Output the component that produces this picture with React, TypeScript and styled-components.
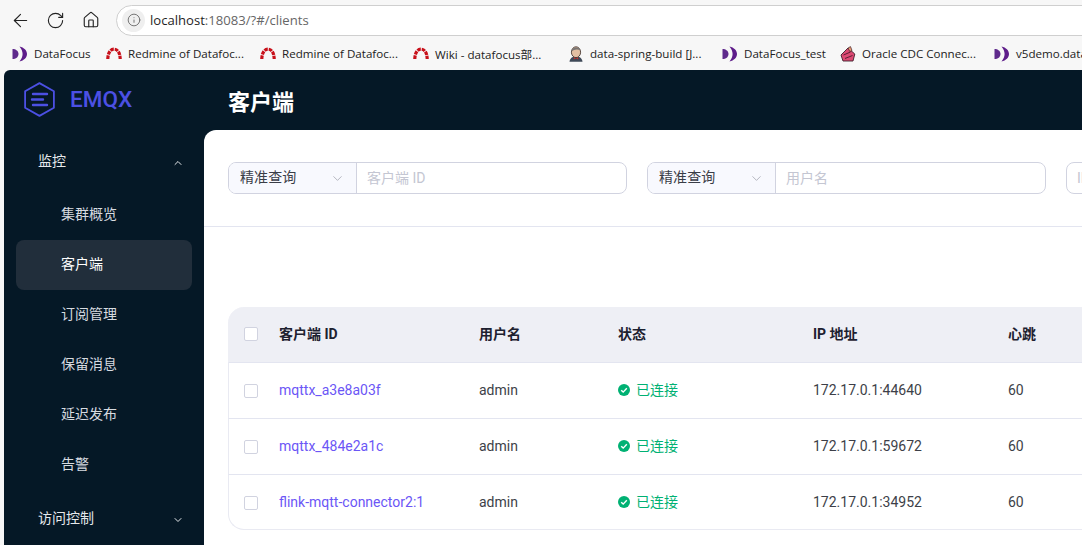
import React from "react";
import styled, { createGlobalStyle } from "styled-components";
import { ArrowLeft, RotateCw, Home, Info, ChevronDown, ChevronUp } from "lucide-react";

const GlobalStyle = createGlobalStyle`
  html, body {
    margin: 0;
    padding: 0;
    height: 545px;
    overflow: hidden;
    background: #f7f7f7;
  }
  * {
    box-sizing: border-box;
  }
`;

const APP_FONT = `Roboto, "Noto Sans CJK SC", sans-serif`;
const CHROME_FONT = `"Open Sans", "Noto Sans CJK SC", sans-serif`;

const Page = styled.div`
  width: 1082px;
  height: 545px;
  display: flex;
  flex-direction: column;
  overflow: hidden;
`;

// browser chrome
const Toolbar = styled.div`
  height: 36px;
  display: flex;
  align-items: center;
  padding: 4px 0 0 10px;
  background: #f7f7f7;
  color: #222;
`;

const NavButton = styled.div<{ $width: number }>`
  width: ${(p) => p.$width}px;
  display: flex;
  align-items: center;
`;

const AddressBar = styled.div`
  flex: 1;
  height: 31px;
  margin-right: -40px;
  display: flex;
  align-items: center;
  padding-left: 5px;
  background: #fff;
  border: 1px solid #cfcfcf;
  border-radius: 16px;
  font: 13.1px ${CHROME_FONT};
`;

const InfoBadge = styled.span`
  width: 23px;
  height: 23px;
  margin-right: 5px;
  display: flex;
  align-items: center;
  justify-content: center;
  border-radius: 50%;
  background: #efefef;
  color: #666;
`;

const Host = styled.span`
  color: #1f1f1f;
`;

const UrlRest = styled.span`
  color: #666;
`;

const BookmarkBar = styled.div`
  height: 34px;
  display: flex;
  align-items: center;
  padding: 1px 0 0 12px;
  background: #f7f7f7;
  white-space: nowrap;
  overflow: hidden;
`;

const Bookmark = styled.div<{ $width: number }>`
  flex: none;
  width: ${(p) => p.$width}px;
  display: flex;
  align-items: center;
  gap: 6px;
  font: 11.6px ${CHROME_FONT};
  color: #222;
`;

const BookmarkIcon = styled.svg`
  flex: none;
  width: 16px;
  height: 16px;
`;

// app shell
const AppFrame = styled.div`
  flex: 1;
  min-height: 0;
  margin-left: 4px;
  display: flex;
  background: #051826;
  border-top-left-radius: 6px;
  font-family: ${APP_FONT};
`;

const Sidebar = styled.aside`
  flex: none;
  width: 200px;
  display: flex;
  flex-direction: column;
`;

const Brand = styled.div`
  flex: none;
  height: 60px;
  display: flex;
  align-items: center;
  gap: 15px;
  padding: 0 0 1px 20px;
  color: #4c50e4;
  font-size: 22.5px;
  font-weight: 500;
`;

const BrandName = styled.span`
  margin-top: -2px;
`;

const Menu = styled.nav`
  flex: none;
  display: flex;
  flex-direction: column;
  padding: 6px 12px 0;
`;

const MenuGroup = styled.div`
  height: 50px;
  flex: none;
  display: flex;
  align-items: center;
  justify-content: space-between;
  margin: 0 0 4px;
  padding: 0 8px 2px 22px;
  color: #e6e9ec;
  font-size: 14px;
`;

const GroupArrow = styled.span`
  display: flex;
  margin-top: 5px;
`;

const SubMenu = styled.div`
  display: flex;
  flex-direction: column;
  margin-bottom: 3px;
`;

const MenuItem = styled.div<{ $active?: boolean }>`
  height: 50px;
  display: flex;
  align-items: center;
  padding: 0 0 4px 45px;
  border-radius: 8px;
  color: ${(p) => (p.$active ? "#fff" : "#d7dbe0")};
  background: ${(p) => (p.$active ? "#212e3b" : "transparent")};
  font-size: 14px;
`;

const Main = styled.main`
  flex: 1;
  min-width: 0;
  display: flex;
  flex-direction: column;
`;

const Title = styled.h1`
  flex: none;
  height: 60px;
  margin: 0;
  padding-left: 24px;
  display: flex;
  align-items: center;
  color: #fff;
  font-size: 22px;
  font-weight: 700;
`;

const Content = styled.div`
  flex: 1;
  min-height: 0;
  background: #fff;
  border-top-left-radius: 12px;
  overflow: hidden;
`;

const FilterBar = styled.div`
  height: 97px;
  display: flex;
  gap: 20px;
  padding: 32px 0 0 24px;
  border-bottom: 1px solid #e3e5f0;
`;

const FilterGroup = styled.div`
  flex: none;
  width: 399px;
  height: 32px;
  display: flex;
  border: 1px solid #d1d3e0;
  border-radius: 8px;
  overflow: hidden;
  font-size: 14px;
  line-height: 20px;
`;

const FilterSelect = styled.div`
  flex: none;
  width: 128px;
  display: flex;
  align-items: center;
  justify-content: space-between;
  padding: 0 11px 3px 11px;
  background: #f8f9fe;
  border-right: 1px solid #d1d3e0;
  color: #3a3d47;
  letter-spacing: 0.1px;
`;

const SelectArrow = styled.span`
  display: flex;
  margin-top: 3px;
`;

const FilterInput = styled.div`
  flex: 1;
  display: flex;
  align-items: center;
  padding: 0 0 1px 10px;
  color: #c4c6d2;
`;

const Table = styled.table`
  width: 1100px;
  margin: 80px 0 0 24px;
  border-collapse: separate;
  border-spacing: 0;
  table-layout: fixed;
  font-size: 14px;
`;

const HeadCell = styled.th<{ $width: number }>`
  width: ${(p) => p.$width}px;
  height: 56px;
  padding: 0 0 3px;
  background: #eeeff5;
  border-bottom: 1px solid #e3e5f0;
  color: #1d2130;
  font-weight: 700;
  text-align: left;

  &:first-child {
    border-left: 1px solid #eeeff5;
    border-top-left-radius: 16px;
  }
`;

const Cell = styled.td`
  height: 56px;
  padding: 0 0 1px;
  border-bottom: 1px solid #e3e5f0;
  color: #3d3f48;

  &:first-child {
    border-left: 1px solid #e9eaf2;
  }

  tr:last-child > & {
    height: 55px;
    border-bottom-color: #e9eaf2;
  }

  tr:last-child > &:first-child {
    border-bottom-left-radius: 16px;
  }
`;

const CheckWrap = styled.div`
  display: flex;
  margin-top: 2px;
  padding-left: 15px;
`;

const Checkbox = styled.span`
  width: 14px;
  height: 14px;
  background: #fff;
  border: 1px solid #d1d3e0;
  border-radius: 2px;
`;

const ClientLink = styled.a`
  color: #6b56f6;
`;

const Status = styled.span`
  display: inline-flex;
  align-items: center;
  gap: 6px;
  color: #00b173;
  line-height: 18px;
`;

const DataFocusIcon = () => (
  <BookmarkIcon viewBox="0 0 16 16">
    <path d="M0.5 3 C3.8 3 6.5 5 6.5 8 C6.5 11 3.8 13 0.5 13 Z" fill="#5f2a8c" />
    <path d="M7.5 0.5 C12 1.5 15 4.5 15 8 C15 11.5 12 14.5 7.5 15.5 C9.6 12.8 10.6 10.5 10.6 8 C10.6 5.5 9.6 3.2 7.5 0.5 Z" fill="#5e1d8a" />
  </BookmarkIcon>
);

const RedmineIcon = () => (
  <BookmarkIcon viewBox="0 0 16 16">
    <path
      d="M1.8 13 C2 6.5 4.5 3.2 8 3.2 C11.5 3.2 14 6.5 14.2 13"
      fill="none"
      stroke="#c8101a"
      strokeWidth="3.2"
      strokeDasharray="3.6 0.9"
    />
  </BookmarkIcon>
);

const JenkinsIcon = () => (
  <BookmarkIcon viewBox="0 0 16 16">
    <path d="M1.5 15.8 C2 11.8 5 10.6 8 10.6 C11 10.6 14 11.8 14.5 15.8 Z" fill="#3f4a58" />
    <ellipse cx="8" cy="6.2" rx="4.6" ry="5.4" fill="#e3bfa2" stroke="#4a3a33" strokeWidth="0.9" />
    <path d="M3.5 5.5 C3.5 0.8 12 0 12.5 4.5 C10 2.8 6 3.2 3.5 5.5 Z" fill="#7a7572" />
    <path d="M5.8 11.2 L8 12.4 L10.2 11.2 L10.2 13.4 L8 12.4 L5.8 13.4 Z" fill="#c4302b" />
  </BookmarkIcon>
);

const OracleIcon = () => (
  <BookmarkIcon viewBox="0 0 16 16">
    <path d="M8 2 L14.8 8 L13 15 L3 15 L1 9 Z" fill="#dd4a74" stroke="#3d1f2a" strokeWidth="0.9" />
    <path d="M8 2 L10.5 0.6 L12 4.5 L9.8 5.6 Z" fill="#ec9c74" stroke="#3d1f2a" strokeWidth="0.7" />
    <path d="M3.5 9 L10.5 6 M5 12.5 L12.5 9.5" stroke="#5d2036" strokeWidth="1" />
  </BookmarkIcon>
);

const Logo = () => (
  <svg width="31" height="35" viewBox="0 0 31 35" fill="none" stroke="#4c50e4" strokeWidth="1.8">
    <path d="M15.5 1.1 L29.9 9.2 V25.8 L15.5 33.9 L1.1 25.8 V9.2 Z" strokeLinejoin="round" />
    <path d="M9 12 H23 M8 17.5 H19 M9 23 H23" strokeWidth="2.4" strokeLinecap="round" />
  </svg>
);

const ConnectedIcon = () => (
  <svg width="12" height="12" viewBox="0 0 12 12">
    <circle cx="6" cy="6" r="6" fill="#00b173" />
    <path d="M3.2 6.2 L5.2 8.1 L8.8 4.2" fill="none" stroke="#fff" strokeWidth="1.4" />
  </svg>
);

const bookmarks = [
  { icon: <DataFocusIcon />, label: "DataFocus", width: 94 },
  { icon: <RedmineIcon />, label: "Redmine of Datafoc...", width: 154 },
  { icon: <RedmineIcon />, label: "Redmine of Datafoc...", width: 153 },
  { icon: <RedmineIcon />, label: "Wiki - datafocus部...", width: 155 },
  { icon: <JenkinsIcon />, label: "data-spring-build [J...", width: 154 },
  { icon: <DataFocusIcon />, label: "DataFocus_test", width: 118 },
  { icon: <OracleIcon />, label: "Oracle CDC Connec...", width: 154 },
  { icon: <DataFocusIcon />, label: "v5demo.datafocus", width: 130 },
];

const subMenu = ["集群概览", "客户端", "订阅管理", "保留消息", "延迟发布", "告警"];

const clients = [
  { id: "mqttx_a3e8a03f", ip: "172.17.0.1:44640" },
  { id: "mqttx_484e2a1c", ip: "172.17.0.1:59672" },
  { id: "flink-mqtt-connector2:1", ip: "172.17.0.1:34952" },
];

const Filter: React.FC<{ placeholder: string; plain?: boolean }> = ({ placeholder, plain }) => (
  <FilterGroup>
    {!plain && (
      <FilterSelect>
        精准查询
        <SelectArrow>
          <ChevronDown size={15} strokeWidth={1} color="#8d8f9c" />
        </SelectArrow>
      </FilterSelect>
    )}
    <FilterInput>{placeholder}</FilterInput>
  </FilterGroup>
);

const App: React.FC = () => (
  <Page>
    <GlobalStyle />
    <Toolbar>
      <NavButton $width={36}>
        <ArrowLeft size={21} strokeWidth={1.3} />
      </NavButton>
      <NavButton $width={36}>
        <RotateCw size={19} strokeWidth={1.4} />
      </NavButton>
      <NavButton $width={34}>
        <Home size={18} strokeWidth={1.5} />
      </NavButton>
      <AddressBar>
        <InfoBadge>
          <Info size={14} strokeWidth={1.5} />
        </InfoBadge>
        <Host>localhost</Host>
        <UrlRest>:18083/?#/clients</UrlRest>
      </AddressBar>
    </Toolbar>
    <BookmarkBar>
      {bookmarks.map((b, i) => (
        <Bookmark key={i} $width={b.width}>
          {b.icon}
          {b.label}
        </Bookmark>
      ))}
    </BookmarkBar>
    <AppFrame>
      <Sidebar>
        <Brand>
          <Logo />
          <BrandName>EMQX</BrandName>
        </Brand>
        <Menu>
          <MenuGroup>
            监控
            <GroupArrow>
              <ChevronUp size={12} color="#e6e9ec" />
            </GroupArrow>
          </MenuGroup>
          <SubMenu>
            {subMenu.map((label) => (
              <MenuItem key={label} $active={label === "客户端"}>
                {label}
              </MenuItem>
            ))}
          </SubMenu>
          <MenuGroup>
            访问控制
            <GroupArrow>
              <ChevronDown size={12} color="#e6e9ec" />
            </GroupArrow>
          </MenuGroup>
        </Menu>
      </Sidebar>
      <Main>
        <Title>客户端</Title>
        <Content>
          <FilterBar>
            <Filter placeholder="客户端 ID" />
            <Filter placeholder="用户名" />
            <Filter placeholder="IP 地址" plain />
          </FilterBar>
          <Table>
            <thead>
              <tr>
                <HeadCell $width={51}>
                  <CheckWrap>
                    <Checkbox />
                  </CheckWrap>
                </HeadCell>
                <HeadCell $width={200}>客户端 ID</HeadCell>
                <HeadCell $width={139}>用户名</HeadCell>
                <HeadCell $width={195}>状态</HeadCell>
                <HeadCell $width={195}>IP 地址</HeadCell>
                <HeadCell $width={320}>心跳</HeadCell>
              </tr>
            </thead>
            <tbody>
              {clients.map((c) => (
                <tr key={c.id}>
                  <Cell>
                    <CheckWrap>
                      <Checkbox />
                    </CheckWrap>
                  </Cell>
                  <Cell>
                    <ClientLink>{c.id}</ClientLink>
                  </Cell>
                  <Cell>admin</Cell>
                  <Cell>
                    <Status>
                      <ConnectedIcon />
                      已连接
                    </Status>
                  </Cell>
                  <Cell>{c.ip}</Cell>
                  <Cell>60</Cell>
                </tr>
              ))}
            </tbody>
          </Table>
        </Content>
      </Main>
    </AppFrame>
  </Page>
);

export default App;
